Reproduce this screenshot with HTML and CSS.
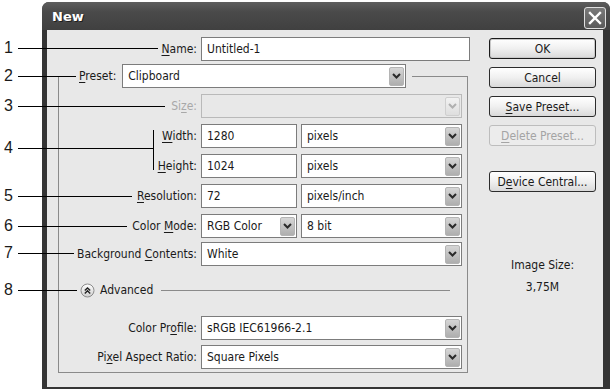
FILE: index.html
```html
<!DOCTYPE html>
<html lang="en">
<head>
    <meta charset="UTF-8">
    <title>New</title>
    <link rel="stylesheet" href="styles.css">
</head>
<body>
    <div class="dialog">
        <div class="titlebar">
            <span class="title">New</span>
            <span class="close">
                <svg width="14" height="14" viewBox="0 0 14 14"><path d="M2 2 L12 12 M12 2 L2 12" stroke="#fff" stroke-width="2.4" stroke-linecap="square"/></svg>
            </span>
        </div>
        <div class="client">
            <div class="main">
                <div class="row name-row">
                    <label class="lbl"><u>N</u>ame:</label>
                    <div class="field textbox">Untitled-1</div>
                </div>

                <fieldset class="group">
                    <legend class="preset">
                        <label><u>P</u>reset:</label>
                        <div class="field combo preset-combo"><span class="val">Clipboard</span><span class="arrow"><svg width="9" height="6" viewBox="0 0 9 6"><path d="M1 1 L4.5 4.5 L8 1" fill="none" stroke="#2a2a2a" stroke-width="2"/></svg></span></div>
                    </legend>

                    <div class="row disabled">
                        <label class="lbl">Si<u>z</u>e:</label>
                        <div class="field combo"><span class="val"></span><span class="arrow"><svg width="9" height="6" viewBox="0 0 9 6"><path d="M1 1 L4.5 4.5 L8 1" fill="none" stroke="#b0b0b0" stroke-width="2"/></svg></span></div>
                    </div>

                    <div class="row">
                        <label class="lbl"><u>W</u>idth:</label>
                        <div class="pair">
                            <div class="field textbox short">1280</div>
                            <div class="field combo"><span class="val">pixels</span><span class="arrow"><svg width="9" height="6" viewBox="0 0 9 6"><path d="M1 1 L4.5 4.5 L8 1" fill="none" stroke="#2a2a2a" stroke-width="2"/></svg></span></div>
                        </div>
                    </div>

                    <div class="row">
                        <label class="lbl"><u>H</u>eight:</label>
                        <div class="pair">
                            <div class="field textbox short">1024</div>
                            <div class="field combo"><span class="val">pixels</span><span class="arrow"><svg width="9" height="6" viewBox="0 0 9 6"><path d="M1 1 L4.5 4.5 L8 1" fill="none" stroke="#2a2a2a" stroke-width="2"/></svg></span></div>
                        </div>
                    </div>

                    <div class="row">
                        <label class="lbl"><u>R</u>esolution:</label>
                        <div class="pair">
                            <div class="field textbox short">72</div>
                            <div class="field combo"><span class="val">pixels/inch</span><span class="arrow"><svg width="9" height="6" viewBox="0 0 9 6"><path d="M1 1 L4.5 4.5 L8 1" fill="none" stroke="#2a2a2a" stroke-width="2"/></svg></span></div>
                        </div>
                    </div>

                    <div class="row">
                        <label class="lbl">Color <u>M</u>ode:</label>
                        <div class="pair">
                            <div class="field combo short"><span class="val">RGB Color</span><span class="arrow"><svg width="9" height="6" viewBox="0 0 9 6"><path d="M1 1 L4.5 4.5 L8 1" fill="none" stroke="#2a2a2a" stroke-width="2"/></svg></span></div>
                            <div class="field combo"><span class="val">8 bit</span><span class="arrow"><svg width="9" height="6" viewBox="0 0 9 6"><path d="M1 1 L4.5 4.5 L8 1" fill="none" stroke="#2a2a2a" stroke-width="2"/></svg></span></div>
                        </div>
                    </div>

                    <div class="row bg-row">
                        <label class="lbl">Background <u>C</u>ontents:</label>
                        <div class="field combo"><span class="val">White</span><span class="arrow"><svg width="9" height="6" viewBox="0 0 9 6"><path d="M1 1 L4.5 4.5 L8 1" fill="none" stroke="#2a2a2a" stroke-width="2"/></svg></span></div>
                    </div>

                    <div class="advanced">
                        <span class="adv-icon">
                            <svg width="15" height="15" viewBox="0 0 15 15">
                                <defs>
                                    <linearGradient id="advg" x1="0" y1="0" x2="0" y2="1">
                                        <stop offset="0" stop-color="#ffffff"/>
                                        <stop offset="1" stop-color="#cfcfcf"/>
                                    </linearGradient>
                                </defs>
                                <circle cx="7.5" cy="7.5" r="6.5" fill="url(#advg)" stroke="#8c8c8c"/>
                                <path d="M4.8 7.6 L7.5 4.9 L10.2 7.6 M4.8 10.4 L7.5 7.7 L10.2 10.4" fill="none" stroke="#222" stroke-width="1.4"/>
                            </svg>
                        </span>
                        <span class="adv-text">Advanced</span>
                        <span class="adv-line"></span>
                    </div>

                    <div class="row profile-row">
                        <label class="lbl">Color Pr<u>o</u>file:</label>
                        <div class="field combo"><span class="val">sRGB IEC61966-2.1</span><span class="arrow"><svg width="9" height="6" viewBox="0 0 9 6"><path d="M1 1 L4.5 4.5 L8 1" fill="none" stroke="#2a2a2a" stroke-width="2"/></svg></span></div>
                    </div>

                    <div class="row pixel-row">
                        <label class="lbl">Pi<u>x</u>el Aspect Ratio:</label>
                        <div class="field combo"><span class="val">Square Pixels</span><span class="arrow"><svg width="9" height="6" viewBox="0 0 9 6"><path d="M1 1 L4.5 4.5 L8 1" fill="none" stroke="#2a2a2a" stroke-width="2"/></svg></span></div>
                    </div>
                </fieldset>
            </div>

            <div class="side">
                <div class="btn default">OK</div>
                <div class="btn">Cancel</div>
                <div class="btn"><u>S</u>ave Preset...</div>
                <div class="btn off"><u>D</u>elete Preset...</div>
                <div class="btn central">D<u>e</u>vice Central...</div>
                <div class="size-info">
                    <div>Image Size:</div>
                    <div class="size-value">3,75M</div>
                </div>
            </div>
        </div>
    </div>

    <!-- numbered annotations drawn over the dialog -->
    <div class="callouts">
        <div class="callout c1"><span class="num">1</span><span class="line"></span></div>
        <div class="callout c2"><span class="num">2</span><span class="line"></span></div>
        <div class="callout c3"><span class="num">3</span><span class="line"></span></div>
        <div class="callout c4"><span class="num">4</span><span class="line"></span><span class="bracket"></span></div>
        <div class="callout c5"><span class="num">5</span><span class="line"></span></div>
        <div class="callout c6"><span class="num">6</span><span class="line"></span></div>
        <div class="callout c7"><span class="num">7</span><span class="line"></span></div>
        <div class="callout c8"><span class="num">8</span><span class="line"></span></div>
    </div>
</body>
</html>
```

FILE: styles.css
```css
body {
    margin: 0;
    width: 610px;
    height: 389px;
    overflow: hidden;
    position: relative;
    background: #fff;
    font-family: "DejaVu Sans Condensed", "DejaVu Sans", sans-serif;
    font-stretch: condensed;
    font-size: 12px;
    color: #1a1a1a;
}
u {
    text-decoration: underline;
    text-underline-offset: 2px;
}

/* window frame */
.dialog {
    margin: 2px 0 0 42px;
    width: 568px;
    height: 388px;
    box-sizing: border-box;
    background: #353535;
    border-radius: 7px 7px 0 0;
    padding: 0 7px 3px 5px;
    display: flex;
    flex-direction: column;
}
.titlebar {
    height: 28px;
    margin: 0 -7px 0 -5px;
    padding: 0 4px 0 10px;
    border-radius: 7px 7px 0 0;
    background: linear-gradient(#5e5e5e, #4a4a4a 35%, #404040);
    display: flex;
    align-items: center;
    justify-content: space-between;
}
.title {
    color: #fff;
    font-family: "DejaVu Sans", sans-serif;
    font-stretch: normal;
    font-weight: bold;
    font-size: 13px;
    text-shadow: 1px 1px 0 #1e1e1e;
}
.close {
    width: 20px;
    height: 20px;
    border: 1px solid #e0e0e0;
    border-radius: 3px;
    background: linear-gradient(#7a7a7a, #5a5a5a);
    display: flex;
    align-items: center;
    justify-content: center;
    margin-top: 3px;
}

.client {
    flex: 1;
    background: #e8e8e8;
    display: flex;
}

/* left form */
.main {
    padding: 7px 0 0 11px;
}
.row {
    display: grid;
    grid-template-columns: 138px 1fr;
    column-gap: 4px;
    align-items: center;
    height: 24px;
    margin-top: 6px;
}
.row.name-row {
    grid-template-columns: 139px 269px;
    margin-top: 0;
}
.lbl {
    text-align: right;
    white-space: nowrap;
}
.disabled .lbl {
    color: #a8a8a8;
}
.field {
    height: 24px;
    box-sizing: border-box;
    border: 1px solid #7c7c7c;
    background: #fff;
    display: flex;
    align-items: center;
    padding-left: 5px;
    white-space: nowrap;
}
.combo .val {
    flex: 1;
}
.arrow {
    width: 15px;
    height: 19px;
    margin-right: 1px;
    box-sizing: border-box;
    border: 1px solid #b4b4b4;
    border-radius: 2px;
    background: linear-gradient(#d6d6d6, #aeaeae);
    display: flex;
    align-items: center;
    justify-content: center;
}
.disabled .field {
    background: #e8e8e8;
    border-color: #b9b9b9;
}
.disabled .arrow {
    background: linear-gradient(#f2f2f2, #dedede);
    border-color: #cfcfcf;
}
.pair {
    display: grid;
    grid-template-columns: 96px 1fr;
    column-gap: 4px;
}

.group {
    margin: 3px 0 0 0;
    width: 410px;
    box-sizing: border-box;
    border: 1px solid #8a8a8a;
    padding: 0 5px 3px 0;
}
.preset {
    margin-left: 17px;
    padding: 0 6px 0 3px;
    display: flex;
    align-items: center;
    gap: 6px;
}
.preset-combo {
    width: 284px;
}
.row.bg-row {
    margin-top: 4px;
}

.advanced {
    display: flex;
    align-items: center;
    height: 16px;
    margin: 16px 12px 0 21px;
}
.adv-icon {
    width: 15px;
    height: 15px;
    display: flex;
}
.adv-text {
    margin-left: 5px;
}
.adv-line {
    flex: 1;
    height: 1px;
    background: #8a8a8a;
    margin-left: 8px;
}
.row.profile-row {
    margin-top: 18px;
}
.row.pixel-row {
    margin-top: 5px;
}

/* right column */
.side {
    margin-left: 19px;
    padding-top: 8px;
    width: 107px;
    display: flex;
    flex-direction: column;
    gap: 8px;
}
.btn {
    height: 21px;
    box-sizing: border-box;
    border: 1px solid #2c2c2c;
    border-radius: 3px;
    background: linear-gradient(#ffffff, #f0f0f0 50%, #d9d9d9);
    display: flex;
    align-items: center;
    justify-content: center;
}
.btn.default {
    border-color: #1a1a1a;
    box-shadow: inset 0 0 0 1px #c8c8c8;
}
.btn.off {
    color: #a4a4a4;
    border-color: #bdbdbd;
    background: #ececec;
}
.btn.central {
    margin-top: 17px;
}
.size-info {
    margin-top: 58px;
    text-align: center;
}
.size-value {
    margin-top: 8px;
}

/* annotations */
.callouts {
    position: absolute;
    inset: 0;
    pointer-events: none;
    font-family: "Liberation Sans", Arial, sans-serif;
}
.callout {
    position: absolute;
    left: 0;
    height: 1px;
}
.num {
    position: absolute;
    left: 4px;
    top: -9px;
    font-size: 16px;
    line-height: 18px;
}
.line {
    position: absolute;
    left: 18px;
    right: 0;
    top: 0;
    height: 1px;
    background: #000;
}
.bracket {
    position: absolute;
    right: 0;
    top: -18px;
    width: 1px;
    height: 40px;
    background: #000;
}
.c1 { top: 48px; width: 158px; }
.c2 { top: 76px; width: 76px; }
.c3 { top: 106px; width: 165px; }
.c4 { top: 148px; width: 154px; }
.c5 { top: 196px; width: 132px; }
.c6 { top: 226px; width: 127px; }
.c7 { top: 253px; width: 74px; }
.c8 { top: 290px; width: 77px; }
```
